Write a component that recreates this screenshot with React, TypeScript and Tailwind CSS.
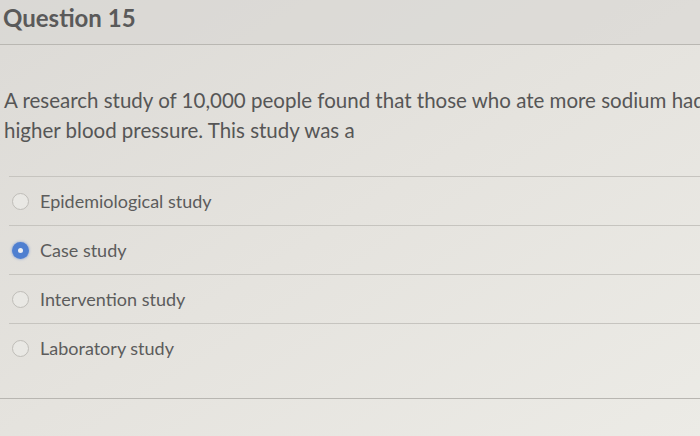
const options = [
  { label: 'Epidemiological study', checked: false },
  { label: 'Case study', checked: true },
  { label: 'Intervention study', checked: false },
  { label: 'Laboratory study', checked: false },
]

function Radio({ checked }: { checked: boolean }) {
  if (checked) {
    return (
      <span className="flex h-[17px] w-[17px] shrink-0 items-center justify-center rounded-full bg-[#4f7fd0] shadow-[0_0_2px_1px_rgba(90,130,210,0.35)]">
        <span className="h-[5px] w-[5px] rounded-full bg-[#eef0f4]" />
      </span>
    )
  }
  return <span className="h-[17px] w-[17px] shrink-0 rounded-full border-[1.5px] border-[#bfbdb8] bg-[#e9e8e4]" />
}

export default function App() {
  return (
    <div
      className="h-[436px] w-[700px] overflow-hidden bg-gradient-to-br from-[#dcdad6] via-[#e5e3de] to-[#ecebe6] text-[#575757]"
      style={{ fontFamily: 'Lato, "Open Sans", sans-serif' }}
    >
      <div className="flex h-[45px] items-start border-b border-[#b9b7b2] bg-[#d9d7d3]/60 pl-[3px] pt-[3px]">
        <h1 className="text-[24px] font-bold leading-[30px] text-[#5a5a5a]">Question 15</h1>
      </div>

      <div className="w-[760px]">
        <p className="whitespace-nowrap pl-[4px] pt-[40px] text-[20.5px] leading-[30px] text-[#565656]">
          A research study of 10,000 people found that those who ate more sodium had
          <br />
          higher blood pressure. This study was a
        </p>

        <div className="ml-[9px] mt-[31px] border-t border-[#c6c4bf]">
          {options.map((o, i) => (
            <div
              key={o.label}
              className={`flex h-[49px] items-center gap-[11px] pl-[3px] ${
                i < options.length - 1 ? 'border-b border-[#c6c4bf]' : ''
              }`}
            >
              <Radio checked={o.checked} />
              <span className="text-[18px] text-[#5c5c5c]">{o.label}</span>
            </div>
          ))}
        </div>

        <div className="mt-[25px] border-t border-[#b8b6b1]" />
      </div>
    </div>
  )
}
